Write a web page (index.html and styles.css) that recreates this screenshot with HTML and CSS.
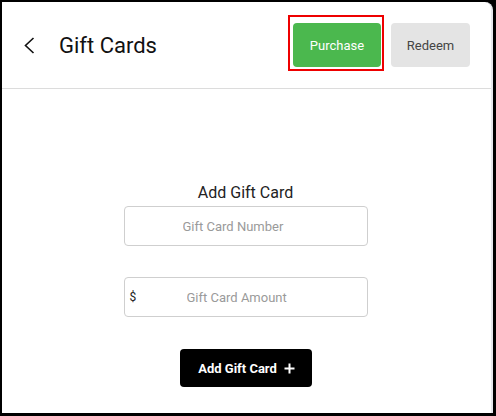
FILE: index.html
```html
<!DOCTYPE html>
<html lang="en">
<head>
<meta charset="utf-8">
<title>Gift Cards</title>
<link rel="stylesheet" href="styles.css">
</head>
<body>
<div class="card">
  <header class="header">
    <button class="back" aria-label="Back">
      <svg width="11" height="17" viewBox="0 0 11 17"><polyline points="9.5,1 1.5,8.5 9.5,16" fill="none" stroke="#111" stroke-width="1.6"/></svg>
    </button>
    <h1 class="title">Gift Cards</h1>
    <div class="actions">
      <button class="btn btn-purchase">Purchase</button>
      <button class="btn btn-redeem">Redeem</button>
    </div>
  </header>
  <main class="content">
    <h2 class="heading">Add Gift Card</h2>
    <div class="field">
      <input class="field-input input-number" type="text" placeholder="Gift Card Number">
    </div>
    <div class="field field-amount">
      <span class="prefix">$</span>
      <input class="field-input input-amount" type="text" placeholder="Gift Card Amount">
    </div>
    <button class="btn-add">Add Gift Card
      <svg width="11" height="11" viewBox="0 0 11 11"><path d="M5.5 0.5v10M0.5 5.5h10" stroke="#fff" stroke-width="2"/></svg>
    </button>
  </main>
</div>
</body>
</html>
```
FILE: styles.css
```css
html, body {
  margin: 0;
  padding: 0;
  background: #000;
  font-family: Roboto, "Liberation Sans", sans-serif;
}
.card {
  margin: 2px 0 0 2px;
  width: 489px;
  height: 411px;
  background: #fff;
  border-right: 2px solid #e6e7ec;
  border-top-right-radius: 8px;
  display: flex;
  flex-direction: column;
}
.header {
  height: 86px;
  border-bottom: 1px solid #dcdcdc;
  display: flex;
  align-items: center;
  padding: 0 21px 0 22px;
}
.back {
  border: 0;
  background: none;
  padding: 0;
  margin: 0 21px 0 0;
  width: 14px;
  height: 17px;
  display: flex;
  align-items: center;
}
.title {
  margin: 0;
  font-size: 22px;
  font-weight: 400;
  color: #111;
}
.actions {
  margin-left: auto;
  display: flex;
  gap: 10px;
}
.btn {
  height: 44px;
  border: 0;
  border-radius: 4px;
  font-family: Roboto, "Liberation Sans", sans-serif;
  font-size: 13px;
  padding: 0;
  cursor: pointer;
}
.btn-purchase {
  width: 88px;
  background: #4bb84e;
  color: #fff;
  position: relative;
}
.btn-purchase::after {
  content: "";
  position: absolute;
  left: -5px;
  top: -8px;
  width: 92px;
  height: 52px;
  border: 2px solid #ee0000;
}
.btn-redeem {
  width: 79px;
  background: #e4e4e4;
  color: #444;
}
.content {
  display: flex;
  flex-direction: column;
  align-items: center;
  padding: 94px 2px 0 0;
}
.heading {
  margin: 0 0 4px;
  font-size: 16px;
  line-height: 19px;
  font-weight: 400;
  color: #222;
}
.field {
  width: 242px;
  height: 38px;
  border: 1px solid #cfcfcf;
  border-radius: 4px;
  display: flex;
  align-items: center;
}
.field-amount {
  margin-top: 31px;
  padding-left: 5px;
  width: 237px;
}
.prefix {
  font-size: 12px;
  color: #222;
  width: 8px;
}
.field-input {
  flex: 1;
  min-width: 0;
  height: 100%;
  border: 0;
  outline: none;
  background: transparent;
  text-align: left;
  font-family: Roboto, "Liberation Sans", sans-serif;
  font-size: 13px;
  padding: 0;
}
.input-number {
  padding-left: 58px;
}
.input-amount {
  padding-left: 49px;
}
.field-input::placeholder {
  color: #9a9a9a;
}
.btn-add {
  margin-top: 32px;
  width: 132px;
  height: 38px;
  background: #000;
  color: #fff;
  border: 0;
  border-radius: 4px;
  font-family: Roboto, "Liberation Sans", sans-serif;
  font-size: 13px;
  font-weight: 700;
  display: flex;
  align-items: center;
  justify-content: center;
  gap: 7px;
  padding: 0 0 0 2px;
}
```
